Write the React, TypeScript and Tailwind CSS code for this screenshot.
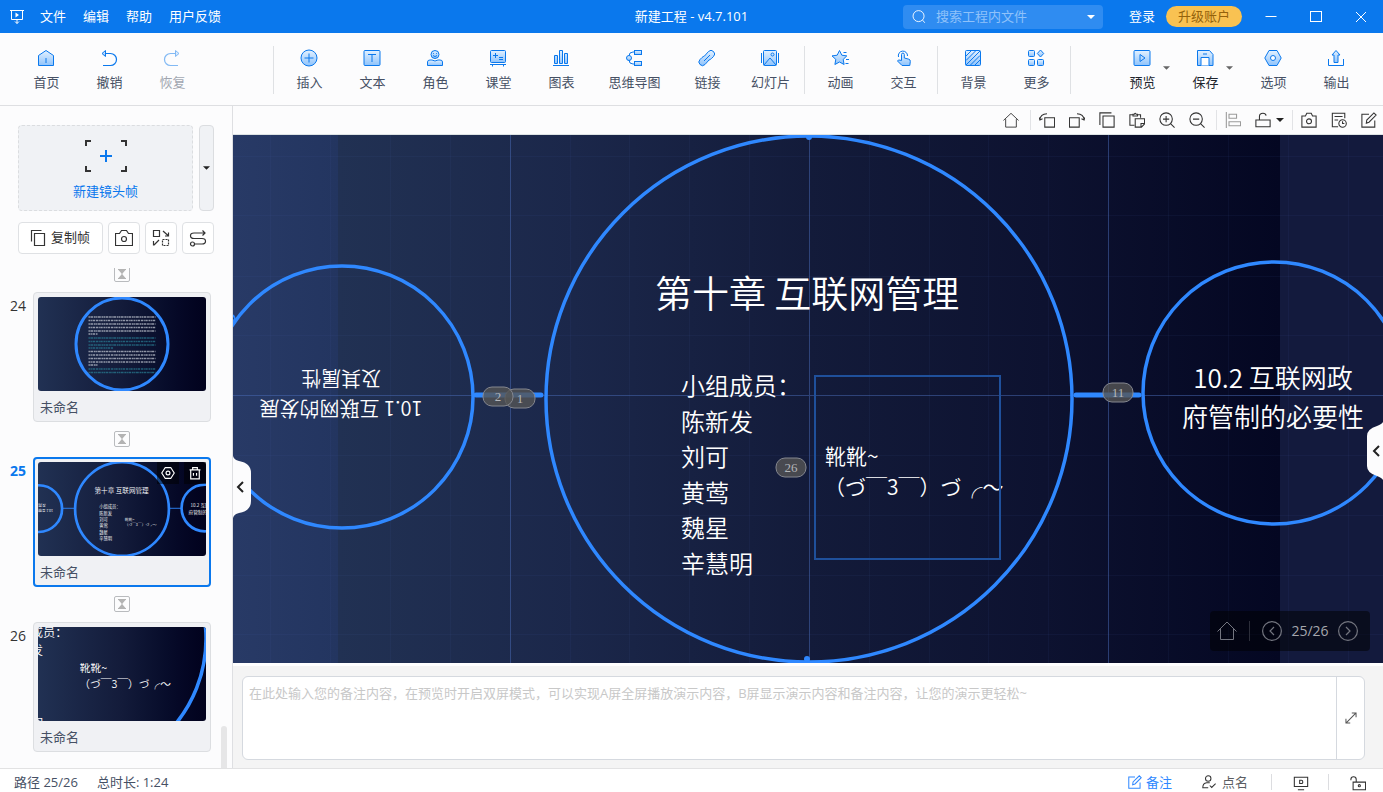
import type { ReactNode } from "react";

/* ---------- icons ---------- */

const Glyph = ({
  children,
  size = 18,
  className = "",
}: {
  children: ReactNode;
  size?: number;
  className?: string;
}) => (
  <svg
    width={size}
    height={size}
    viewBox="0 0 18 18"
    fill="none"
    stroke="currentColor"
    strokeWidth="1"
    className={className}
    aria-hidden="true"
  >
    {children}
  </svg>
);

const Caret = ({ className = "" }: { className?: string }) => (
  <svg width="8" height="4" viewBox="0 0 8 4" className={className} aria-hidden="true">
    <path d="M0 0h8L4 4z" fill="currentColor" />
  </svg>
);

const F = "url(#tool-fill)";

const icons: Record<string, ReactNode> = {
  首页: (
    <>
      <path d="M1.5 6.5 9 1.5l7.5 5v10h-15z" fill={F} />
      <path d="M9 9v5" />
    </>
  ),
  撤销: (
    <>
      <path d="M6 4.5h4.5a6 6 0 0 1 0 12H3" strokeWidth="1.2" />
      <path d="M5.5 1.5 2 4.5l3.5 3z" fill={F} />
    </>
  ),
  恢复: (
    <>
      <path d="M12 4.5H7.5a6 6 0 0 0 0 12H15" strokeWidth="1.2" />
      <path d="M12.5 1.5 16 4.5l-3.5 3z" fill={F} />
    </>
  ),
  插入: (
    <>
      <circle cx="9" cy="9" r="8" fill={F} />
      <path d="M9 4.5v9M4.5 9h9" />
    </>
  ),
  文本: (
    <>
      <rect x="1" y="1.5" width="16" height="15" rx="1" fill={F} />
      <path d="M5 5.5h8M9 5.5v7.5" />
    </>
  ),
  角色: (
    <>
      <circle cx="9" cy="5.5" r="4" fill={F} />
      <path d="M7 6.5q2 2.2 4 0M7.5 4.2v.8M10.5 4.2v.8" />
      <path d="M1.5 16.5v-3.5q0-2 2.5-2h2q3 2 6 0h2q2.5 0 2.5 2v3.5z" fill={F} />
    </>
  ),
  课堂: (
    <>
      <rect x="1.5" y="1.5" width="15" height="12" rx="1" fill={F} />
      <path d="M4 6.5h5M6.5 4v5M10 8.5h4M10 10.5h4M1 15.5h16M3.5 15.5v2M14.5 15.5v2" />
    </>
  ),
  图表: (
    <>
      <path d="M2.5 6.5h3v8h-3zM7.5 1.5h3v13h-3zM12.5 4.5h3v10h-3z" fill={F} />
      <path d="M1 16.5h16" />
    </>
  ),
  思维导图: (
    <>
      <path d="M9 3H8Q4 3 4 7v4q0 4 4 4h1" />
      <circle cx="4" cy="9" r="2.5" fill={F} />
      <rect x="9.5" y="1.5" width="7" height="4" fill={F} />
      <rect x="9.5" y="12.5" width="7" height="4" fill={F} />
    </>
  ),
  链接: (
    <>
      <path d="M10.5 2.5a3.5 3.5 0 0 1 5 5l-2 2q-1 1-2.5 1.5l-4 4.5a3.4 3.4 0 0 1-5-5l2-2q1-1 2.5-1.5z" fill={F} />
      <path d="m6 12 6-6" />
    </>
  ),
  幻灯片: (
    <>
      <rect x="2.5" y="1.5" width="13" height="15" rx="1" fill={F} />
      <path d="M.5 4v10M17.5 4v10M3 16l6-7 6 7" />
      <circle cx="11.5" cy="5.5" r="1.5" />
    </>
  ),
  动画: (
    <>
      <path d="m8.5 1.5 2.3 4.7 5 .7-3.6 3.5.9 5.1-4.6-2.5-4.6 2.5.9-5.1L1 6.9l5.2-.7z" fill={F} />
      <path d="M12.5 3.5h3M15 10.5h3M14.5 14.5h3" />
    </>
  ),
  交互: (
    <>
      <path d="M4.5 8a4.6 4.6 0 1 1 9-1" />
      <path d="M7.5 11.5V5.5a1.4 1.4 0 0 1 2.8 0V9l4.5 1.2q1.7.5 1.5 2.3l-.5 4H8L3.5 12q.8-1.7 2.5-.8z" fill={F} />
    </>
  ),
  背景: (
    <>
      <rect x="1.5" y="1.5" width="15" height="15" rx="1" fill={F} />
      <path d="M2 7 7 2M2 11.5 11.5 2M2 16 16 2M6.5 16 16 6.5M11 16l5-5" />
    </>
  ),
  更多: (
    <>
      <rect x="1.5" y="1.5" width="6" height="6" rx="1" fill={F} />
      <path d="m13.5 1 3.2 3.5-3.2 3.5-3.2-3.5z" fill={F} />
      <rect x="1.5" y="10.5" width="6" height="6" rx="1" fill={F} />
      <rect x="10.5" y="10.5" width="6" height="6" rx="1" fill={F} />
    </>
  ),
  预览: (
    <>
      <rect x="1" y="1.5" width="16" height="15" rx="1" fill={F} />
      <path d="M7 5.5v7l5-3.5z" />
    </>
  ),
  保存: (
    <>
      <path d="M1.5 1.5h12l3.5 4v11H1.5z" fill={F} />
      <path d="M5 16.5v-8h8v8" fill="#fff" />
      <path d="M7 5h4" />
    </>
  ),
  选项: (
    <>
      <path d="M5 1.5h8L17.2 9 13 16.5H5L.8 9z" fill={F} />
      <circle cx="9" cy="9" r="2.5" fill="#fff" />
    </>
  ),
  输出: (
    <>
      <path d="M9 1.5 13 6h-2v7.5H7V6H5z" fill={F} />
      <path d="M1.5 10v6.5h15V10" />
    </>
  ),
};

/* ---------- title bar ---------- */

const TitleBar = () => (
  <header className="grid h-[33px] shrink-0 grid-cols-[1fr_auto_1fr] items-center bg-[#0a78ed] text-white">
    <nav className="flex items-center gap-[17px] pl-2">
      <Glyph className="-mr-[3px]">
        <path d="M2 2.5h14M3.5 2.5v9h11v-9M9 11.5v4M7 13.5l2 2 2-2" />
        <path d="M7.5 4.5v5L11 7z" fill="currentColor" stroke="none" />
      </Glyph>
      {["文件", "编辑", "帮助", "用户反馈"].map((m) => (
        <button key={m}>{m}</button>
      ))}
    </nav>
    <h1>新建工程 - v4.7.101</h1>
    <div className="flex items-center justify-end">
      <div className="flex h-6 w-[200px] items-center rounded-sm bg-[#2f8cf1] px-2">
        <Glyph size={16}>
          <circle cx="8.5" cy="8" r="6.2" />
          <path d="m13 12.5 2.5 3" />
        </Glyph>
        <input
          aria-label="搜索工程内文件"
          placeholder="搜索工程内文件"
          className="ml-[9px] min-w-0 flex-1 bg-transparent outline-none placeholder:text-[#8fc2fa]"
        />
        <button aria-label="搜索选项">
          <Caret />
        </button>
      </div>
      <button className="ml-[26px]">登录</button>
      <button className="mr-[6px] ml-[11px] h-[21px] w-[76px] rounded-full bg-[#f9c252] text-[#94620c]">升级账户</button>
      <button aria-label="最小化" className="flex w-[45px] justify-center">
        <Glyph><path d="M3.5 8.5h11" /></Glyph>
      </button>
      <button aria-label="最大化" className="flex w-[45px] justify-center">
        <Glyph><rect x="3.5" y="3.5" width="11" height="10" /></Glyph>
      </button>
      <button aria-label="关闭" className="flex w-[45px] justify-center">
        <Glyph><path d="m4 4 10 10M14 4 4 14" /></Glyph>
      </button>
    </div>
  </header>
);

/* ---------- main toolbar ---------- */

const Tool = ({ name, wide, menu, disabled }: { name: string; wide?: boolean; menu?: boolean; disabled?: boolean }) => (
  <div className={`relative flex shrink-0 justify-center ${wide ? "w-[83px]" : "w-[63px]"}`}>
    <button
      disabled={disabled}
      className={`flex flex-col items-center gap-[5px] ${menu ? "text-[#20242c]" : "text-[#465064]"} ${disabled ? "opacity-50" : ""}`}
    >
      <Glyph className="text-[#0a78ed]">{icons[name]}</Glyph>
      <span className="leading-5">{name}</span>
    </button>
    {menu && (
      <button aria-label={`${name}选项`} className="absolute top-[17px] right-1 text-[#666]">
        <Caret className="w-[7px]" />
      </button>
    )}
  </div>
);

const Divider = () => <span className="mr-1 ml-0.5 h-12 w-px bg-[#dfe1e4]" />;

const Toolbar = () => (
  <div className="flex h-[73px] shrink-0 items-center border-b border-[#dedfe2] bg-[#fcfcfd] px-[15px] pt-0.5">
    <svg width="0" height="0" className="absolute" aria-hidden="true">
      <linearGradient id="tool-fill" x1="0" y1="0" x2="0" y2="1">
        <stop offset="0" stopColor="#e3f1ff" />
        <stop offset="1" stopColor="#8fc3fb" />
      </linearGradient>
    </svg>
    <Tool name="首页" />
    <Tool name="撤销" />
    <Tool name="恢复" disabled />
    <div className="ml-[67px] flex items-center">
      <Divider />
      <Tool name="插入" />
      <Tool name="文本" />
      <Tool name="角色" />
      <Tool name="课堂" />
      <Tool name="图表" />
      <Tool name="思维导图" wide />
      <Tool name="链接" />
      <Tool name="幻灯片" />
      <Divider />
      <Tool name="动画" />
      <Tool name="交互" />
      <Divider />
      <Tool name="背景" />
      <Tool name="更多" />
      <Divider />
    </div>
    <div className="ml-auto flex">
      <Tool name="预览" menu />
      <Tool name="保存" menu />
      <span className="w-[5px]" />
      <Tool name="选项" />
      <Tool name="输出" />
    </div>
  </div>
);

/* ---------- slide drawing, shared by the canvas and the thumbnails ---------- */

const members = [
  { y: 260, name: "小组成员：" },
  { y: 296, name: "陈新发" },
  { y: 331, name: "刘可" },
  { y: 367, name: "黄莺" },
  { y: 402, name: "魏星" },
  { y: 438, name: "辛慧明" },
];

// closeUp leaves out whatever lies outside the zoomed-in frame
const SlideArt = ({ stroke, link, closeUp }: { stroke: number; link: number; closeUp?: boolean }) => (
  <>
    <g fill="none" stroke="#2f88ff" strokeWidth={stroke}>
      <circle cx="109" cy="262" r="131" />
      <circle cx="576" cy="264" r="263" />
      <circle cx="1041" cy="258" r="131" />
    </g>
    <g stroke="#2f88ff" strokeWidth={link} strokeLinecap="round">
      <path d="M243 260h65M843 260h63" />
    </g>
    <g fill="#fff" className="font-['Noto_Sans_CJK_SC',sans-serif] font-[350]">
      <g fontSize="24">
        {members
          .filter((m) => !closeUp || m.name.length > 2)
          .map((m) => (
            <text key={m.name} x="448" y={m.y}>{m.name}</text>
          ))}
      </g>
      <g fontSize="21">
        <text x="592" y="329">靴靴~</text>
        <text x="591" y="360">（づ￣3￣）づ╭～</text>
      </g>
      {!closeUp && (
        <>
          <text x="422" y="173" fontSize="37">第十章 互联网管理</text>
          <g fontSize="26" textAnchor="middle">
            <text x="1040" y="253">10.2 互联网政</text>
            <text x="1040" y="292">府管制的必要性</text>
          </g>
          <g fontSize="20" textAnchor="middle" transform="rotate(180 108 250)">
            <text x="108" y="234">10.1 互联网的发展</text>
            <text x="108" y="264">及其属性</text>
          </g>
        </>
      )}
    </g>
  </>
);

const badges = [
  { x: 287, y: 264, label: "1" },
  { x: 265, y: 262, label: "2" },
  { x: 885, y: 258, label: "11" },
  { x: 558, y: 333, label: "26" },
];

const columns = [37, 97, 157, 217, 337, 396, 456, 516, 636, 696, 755, 815, 935, 995, 1055, 1115];
const rows = [21, 80, 141, 200, 320, 380, 440, 499];

const Canvas = () => (
  <div className="relative min-h-0 flex-1 overflow-hidden bg-[#0f1737]">
    <svg
      viewBox="0 0 1150 528"
      preserveAspectRatio="xMidYMid slice"
      className="h-full w-full"
      role="img"
      aria-label="第十章 互联网管理"
    >
      <defs>
        <linearGradient id="slide-bg">
          <stop offset="0" stopColor="#213153" />
          <stop offset="0.25" stopColor="#1b274a" />
          <stop offset="0.5" stopColor="#131b3a" />
          <stop offset="0.75" stopColor="#0d1230" />
          <stop offset="1" stopColor="#040722" />
        </linearGradient>
        <linearGradient id="band-left">
          <stop offset="0" stopColor="#283a66" />
          <stop offset="1" stopColor="#233560" />
        </linearGradient>
      </defs>
      <rect x="105" width="942" height="528" fill="url(#slide-bg)" />
      <rect width="105" height="528" fill="url(#band-left)" />
      <rect x="1047" width="103" height="528" fill="#131a3d" />
      <g stroke="#4a6cb0" strokeOpacity="0.08" shapeRendering="crispEdges">
        {columns.map((x) => (
          <path key={x} d={`M${x} 0v528`} />
        ))}
        {rows.map((y) => (
          <path key={y} d={`M0 ${y}h1150`} />
        ))}
      </g>
      <path
        d="M277 0v528M576 0v528M875 0v528M0 260h1150"
        stroke="#4a6cb8"
        strokeOpacity="0.5"
        shapeRendering="crispEdges"
      />
      <SlideArt stroke={3.5} link={5} />
      <path d="M0 180q3 4 0 6" stroke="#2f88ff" strokeWidth="2" />
      <circle cx="576" cy="2" r="3" fill="#2f88ff" />
      <circle cx="574" cy="524" r="3" fill="#2f88ff" />
      <rect x="582" y="241" width="185" height="183" fill="none" stroke="#1f509b" strokeWidth="2" />
      {badges.map((b) => (
        <g key={b.label}>
          <rect
            x={b.x - 15}
            y={b.y - 10}
            width="30"
            height="19"
            rx="9"
            fill="#555"
            fillOpacity="0.8"
            stroke="#85878f"
          />
          <text
            x={b.x}
            y={b.y + 4}
            fontSize="13"
            textAnchor="middle"
            fill="#b4b6ba"
            className="font-['Liberation_Serif',serif]"
          >
            {b.label}
          </text>
        </g>
      ))}
    </svg>

    <button aria-label="收起左侧面板" className="absolute top-[321px] left-0 h-[62px] w-[18px]">
      <svg width="18" height="62" viewBox="0 0 18 62" aria-hidden="true">
        <path d="M0 0q1 4 6 5 12 2 12 12v28q0 10-12 12-5 1-6 5z" fill="#fcfcfd" />
        <path d="m10 26-5 5 5 5" fill="none" stroke="#222" strokeWidth="2" />
      </svg>
    </button>
    <button aria-label="展开右侧面板" className="absolute top-[287px] right-0 h-[58px] w-4">
      <svg width="16" height="58" viewBox="0 0 16 58" aria-hidden="true">
        <path d="M16 0v58q-1-2-6-4Q0 51 0 44V14Q0 7 10 4q5-2 6-4z" fill="#fcfcfd" />
        <path d="m12 24-5 5 5 5" fill="none" stroke="#222" strokeWidth="2" />
      </svg>
    </button>

    <div className="absolute right-[13px] bottom-3 flex h-10 w-40 items-center rounded bg-black/50 pl-[7px] text-[#73757f]">
      <button aria-label="回到首页">
        <svg width="20" height="20" viewBox="0 0 20 20" fill="none" stroke="currentColor" aria-hidden="true">
          <path d="M.5 10.5 10 1l9.5 9.5M3.5 8v10.5h13V8" />
        </svg>
      </button>
      <span className="mx-3 h-5 w-px bg-[#2c2e3a]" />
      <button aria-label="上一帧">
        <svg width="20" height="20" viewBox="0 0 20 20" fill="none" stroke="currentColor" strokeWidth="1.2" aria-hidden="true">
          <circle cx="10" cy="10" r="9.4" />
          <path d="m12 6-4 4 4 4" />
        </svg>
      </button>
      <span className="flex-1 text-center text-sm text-[#a5a7ad]">25/26</span>
      <button aria-label="下一帧" className="mr-3">
        <svg width="20" height="20" viewBox="0 0 20 20" fill="none" stroke="currentColor" strokeWidth="1.2" aria-hidden="true">
          <circle cx="10" cy="10" r="9.4" />
          <path d="m8 6 4 4-4 4" />
        </svg>
      </button>
    </div>
  </div>
);

/* ---------- sidebar ---------- */

const Hourglass = () => (
  <li className="flex w-[244px] justify-center pb-px">
    <button
      aria-label="停留时间"
      className="flex size-4 items-center justify-center rounded-xs border border-[#b9bbbe] text-[#b3b3b3]"
    >
      <svg width="8" height="10" viewBox="0 0 8 10" fill="currentColor" aria-hidden="true">
        <path d="M0 0h8v1H7.5L4.5 4.5v1L7.5 9H8v1H0V9h.5l3-3.5v-1L.5 1H0z" />
      </svg>
    </button>
  </li>
);

// paragraphs on slide 24 are far too small to read, so they are drawn as dashes
const TextPreview = () => (
  <g strokeWidth="1.5" opacity="0.7">
    {[20, 23.5, 27, 30.5, 34, 37, 41, 44.5, 48, 51, 54.5, 58, 61.5, 65, 68, 72, 75.5].map((y, i) => (
      <path
        key={y}
        d={i === 5 || i === 14 ? `M50.5 ${y}h9` : i === 9 ? `M50.5 ${y}h25` : `M50.5 ${y}h67`}
        stroke={(i >= 6 && i <= 9) || i >= 15 ? "#2a7f95" : "#c9ced8"}
        strokeDasharray={i % 2 ? "2 .6 1.2 .5 2.4 .8" : "1.4 .5 2.8 .7 1.8 .4"}
      />
    ))}
  </g>
);

const thumbBg = "block h-[94px] w-full rounded-[3px] bg-linear-to-r from-[#213153] via-[#131b3a] to-[#02021d]";

const Frame = ({ no, active, children }: { no: number; active?: boolean; children: ReactNode }) => (
  <li className="flex">
    <span
      className={`w-[33px] pr-[7px] pt-1 text-right text-sm ${active ? "font-bold text-[#0a78ed]" : "text-[#333]"}`}
    >
      {no}
    </span>
    <div
      className={`relative h-[130px] w-[178px] rounded bg-[#f0f1f4] ${
        active ? "border-2 border-[#0a78ed] p-[3px]" : "border border-[#dcdee1] p-1"
      }`}
    >
      {children}
      {active && (
        <div className="absolute top-[3px] right-[3px] flex gap-[5px] text-white">
          <button aria-label="帧设置" className="flex size-[22px] items-center justify-center bg-black/50">
            <Glyph size={14}>
              <path d="M5.5 2h7L17 9l-4.5 7h-7L1 9z" strokeWidth="1.5" />
              <circle cx="9" cy="9" r="2.5" strokeWidth="1.5" />
            </Glyph>
          </button>
          <button aria-label="删除帧" className="flex size-[22px] items-center justify-center bg-black/50">
            <Glyph size={14}>
              <path d="M2 5h14M6 5V2h6v3M3.5 5v11.5h11V5M7 9v3.5M11 9v3.5" strokeWidth="1.5" />
            </Glyph>
          </button>
        </div>
      )}
      <p className="mt-1.5 pl-0.5 leading-5 text-[#465064]">未命名</p>
    </div>
  </li>
);

const sideButton = "flex h-8 items-center justify-center rounded border border-[#dfe1e4] bg-white text-[#333]";

const Sidebar = () => (
  <aside className="relative flex w-[233px] shrink-0 flex-col border-r border-[#dedfe2] bg-[#fcfcfd]">
    <div className="flex gap-1.5 pt-[19px] pl-[18px]">
      <button className="flex h-[86px] w-[175px] flex-col items-center rounded-sm border border-dashed border-[#dbdde0] bg-[#f0f2f5] pt-[14px] text-[#0a78ed]">
        <svg width="42" height="32" viewBox="0 0 42 32" fill="none" aria-hidden="true">
          <path d="M1 6V1h5M36 1h5v5M41 26v5h-5M6 31H1v-5" stroke="#333" strokeWidth="2" />
          <path d="M21 10v12M15 16h12" stroke="#0a78ed" strokeWidth="2" />
        </svg>
        <span className="mt-[9px] leading-5">新建镜头帧</span>
      </button>
      <button aria-label="更多镜头帧" className="flex h-[86px] w-[15px] items-center justify-center rounded border border-[#dbdde0] bg-[#f0f2f5] text-[#222]">
        <Caret className="w-[7px]" />
      </button>
    </div>
    <div className="mt-[11px] flex gap-[5px] pl-[18px]">
      <button className={`${sideButton} w-[85px] gap-1 pr-0.5`}>
        <Glyph>
          <path d="M2.5 12.5v-11h10M5.5 4.5h10v12h-10z" strokeWidth="1.2" />
        </Glyph>
        复制帧
      </button>
      <button aria-label="截图" className={`${sideButton} w-8`}>
        <Glyph>
          <path d="M.5 4.5h4l2-3h5l2 3h4v12H.5z" strokeWidth="1.2" />
          <circle cx="9" cy="10" r="2.5" strokeWidth="1.2" />
        </Glyph>
      </button>
      <button aria-label="替换帧" className={`${sideButton} w-8`}>
        <Glyph>
          <path d="M1.5 1.5h6v6h-6zM11 2l5 4.5M16.5 3.5V7H13M2 16l5-5M1.5 12v4.5" strokeWidth="1.2" />
          <path d="M10.5 10.5h6v6h-6z" strokeDasharray="2 1" strokeWidth="1.2" />
        </Glyph>
      </button>
      <button aria-label="路径" className={`${sideButton} w-8`}>
        <Glyph>
          <path d="M16 4H5q-3.5 0-3.5 2.7T5 9.5h8q3.5 0 3.5 2.7T13 15H5.5M13.5 1.5 16 4l-2.5 2.5" strokeWidth="1.2" />
          <circle cx="3.5" cy="15" r="2" strokeWidth="1.2" />
        </Glyph>
      </button>
    </div>
    <div className="mt-[14px] min-h-0 flex-1 overflow-hidden">
      <ul className="-mt-0.5 flex flex-col gap-[9px]">
        <Hourglass />
        <Frame no={24}>
          <svg viewBox="0 0 168 94" className={thumbBg} role="img" aria-label="第24帧">
            <circle cx="84" cy="47" r="46" fill="none" stroke="#2f88ff" strokeWidth="3" />
            <TextPreview />
          </svg>
        </Frame>
        <Hourglass />
        <Frame no={25} active>
          <svg viewBox="105 0 942 528" preserveAspectRatio="xMidYMid slice" className={thumbBg} role="img" aria-label="第25帧">
            <SlideArt stroke={15} link={5} />
          </svg>
        </Frame>
        <Hourglass />
        <Frame no={26}>
          <svg viewBox="510 241 329 184" preserveAspectRatio="xMidYMid slice" className={thumbBg} role="img" aria-label="第26帧">
            <SlideArt stroke={7} link={5} closeUp />
          </svg>
        </Frame>
      </ul>
    </div>
    <span className="absolute right-[5px] bottom-0 h-[42px] w-[6px] rounded-t-full bg-[#e6e6e7]" />
  </aside>
);

/* ---------- view bar over the canvas ---------- */

const ViewButton = ({ label, faded, children }: { label: string; faded?: boolean; children: ReactNode }) => (
  <button aria-label={label} className={`flex w-7 justify-center ${faded ? "text-[#9a9a9a]" : "text-[#333]"}`}>
    <Glyph size={16}>{children}</Glyph>
  </button>
);

const ViewDivider = ({ className }: { className: string }) => <span className={`h-5 w-px bg-[#e2e3e6] ${className}`} />;

const ViewBar = () => (
  <div className="flex h-[29px] shrink-0 items-center justify-end gap-0.5 border-b border-[#dde3e4] bg-[#fcfcfd]">
    <ViewButton label="主页">
      <path d="M.5 9.5 9 1.5l8.5 8M3 8v9h12V8" />
    </ViewButton>
    <ViewDivider className="ml-[3px]" />
    <ViewButton label="向左旋转">
      <path d="M6.5 6.5h11v10.5h-11zM1 8.5Q1.5 2.5 9 2M.2 6 1 9l3-1.5" strokeWidth="1.2" />
    </ViewButton>
    <ViewButton label="向右旋转">
      <path d="M.5 6.5h11v10.5h-11zM17 8.5Q16.5 2.5 9 2M17.8 6 17 9l-3-1.5" strokeWidth="1.2" />
    </ViewButton>
    <ViewButton label="复制">
      <path d="M1 14.5V1h13M4.5 4.5h12.5v12.5H4.5z" strokeWidth="1.2" />
    </ViewButton>
    <ViewButton label="粘贴">
      <path d="M6 15H1V3h3.5M9.5 3H13v3.5M4.5 4.5v-2h1.5q1-2 2 0h1.5v2zM7 7.5h10.5v6L14 17H7zM17 13h-3.5v3.5" strokeWidth="1.2" />
    </ViewButton>
    <ViewButton label="放大">
      <circle cx="8" cy="8" r="7" strokeWidth="1.2" />
      <path d="m13 13 4.5 4.5M4.5 8h7M8 4.5v7" strokeWidth="1.2" />
    </ViewButton>
    <ViewButton label="缩小">
      <circle cx="8" cy="8" r="7" strokeWidth="1.2" />
      <path d="m13 13 4.5 4.5M4.5 8h7" strokeWidth="1.2" />
    </ViewButton>
    <ViewDivider className="ml-[3px]" />
    <ViewButton label="对齐" faded>
      <path d="M1.5 0v18M4.5 2.5H13v4.5H4.5zM4.5 11h13v4.5h-13z" strokeWidth="1.2" />
    </ViewButton>
    <ViewButton label="锁定">
      <path d="M1 9h16v7.5H1zM5 9V5q0-3.5 4-3.5 3 0 3.5 2.5" strokeWidth="1.2" />
    </ViewButton>
    <button aria-label="锁定选项" className="-ml-[3px] text-[#222]">
      <Caret />
    </button>
    <ViewDivider className="ml-[6px]" />
    <ViewButton label="截图">
      <path d="M1 4.5h4l1.5-3h5l1.5 3h4V17H1z" strokeWidth="1.2" />
      <circle cx="9" cy="10.5" r="2.8" strokeWidth="1.2" />
    </ViewButton>
    <ViewButton label="时间轴">
      <path d="M8 16.5H1.5v-15h14V7M4 5h9M4 9h4" strokeWidth="1.2" />
      <circle cx="13" cy="13" r="4.2" strokeWidth="1.2" />
      <path d="M13 10.5V13h2" strokeWidth="1.2" />
    </ViewButton>
    <ViewButton label="编辑">
      <path d="M9 2.5H1V17h14.5V9.5M6 12.5l.5-3.5 8-8 2.5 2.5-8 8z" strokeWidth="1.2" />
    </ViewButton>
  </div>
);

/* ---------- notes and status bar ---------- */

const Notes = () => (
  <section className="h-[105px] shrink-0 border-t-[3px] border-white bg-[#f4f4f4] pt-2.5 pr-[18px] pb-2 pl-[9px]">
    <div className="flex h-full overflow-hidden rounded-md border border-[#d5d9df] bg-white">
      <textarea
        aria-label="备注"
        placeholder="在此处输入您的备注内容，在预览时开启双屏模式，可以实现A屏全屏播放演示内容，B屏显示演示内容和备注内容，让您的演示更轻松~"
        className="flex-1 resize-none px-1.5 py-1.5 leading-5 outline-none placeholder:text-[#c8c8c8]"
      />
      <button aria-label="展开备注" className="flex w-7 items-center justify-center border-l border-[#d5d9df] text-[#555]">
        <Glyph size={14}>
          <path d="M2.5 15.5l13-13M10 2.5h5.5V8M8 15.5H2.5V10" strokeWidth="1.3" />
        </Glyph>
      </button>
    </div>
  </section>
);

const StatusBar = () => (
  <footer className="flex h-6 shrink-0 items-start border-t border-[#e2e2e3] bg-white pt-[3px] pr-[17px] pl-[14px] leading-5 text-[#465064]">
    <span>路径 25/26</span>
    <span className="ml-[19px]">总时长: 1:24</span>
    <button className="ml-auto flex items-center gap-1 text-[#2f88ff]">
      <Glyph size={14}>
        <path d="M9 2.5H1V17h14.5V9.5M6 12.5l.5-3.5 8-8 2.5 2.5-8 8z" strokeWidth="1.3" />
      </Glyph>
      备注
    </button>
    <button className="ml-[30px] flex items-center gap-1.5 text-[#5c5e63]">
      <Glyph size={14} className="text-[#333]">
        <circle cx="8" cy="4.5" r="3.5" strokeWidth="1.3" />
        <path d="M8 16.5H1q0-6 5-6.5h4M10 13.5l2.5 2.5 5-5" strokeWidth="1.3" />
      </Glyph>
      点名
    </button>
    <span className="mt-0.5 ml-[23px] h-4 w-px bg-[#dcdde0]" />
    <button aria-label="放映" className="mt-[3px] ml-[21px] text-[#333]">
      <Glyph size={16}>
        <path d="M1.5 2.5h15v10.5h-15zM5.5 16.5h7" strokeWidth="1.2" />
        <path d="M7.5 6h2q1.5 0 1.5 1.8t-1.5 1.7h-2z" strokeWidth="1.2" />
      </Glyph>
    </button>
    <span className="mt-0.5 ml-[19px] h-4 w-px bg-[#dcdde0]" />
    <button aria-label="锁定" className="mt-[3px] ml-[21px] text-[#333]">
      <Glyph size={16}>
        <path d="M3.5 8h14v8.5h-14zM1 6V5q0-3 3-3t3 3v3" strokeWidth="1.2" />
        <circle cx="10.5" cy="12" r="1.2" strokeWidth="1.2" />
      </Glyph>
    </button>
  </footer>
);

export default function App() {
  return (
    <div className="flex h-screen flex-col overflow-hidden bg-white font-['Open_Sans','Noto_Sans_CJK_SC',sans-serif] text-[13px]">
      <TitleBar />
      <Toolbar />
      <main className="flex min-h-0 flex-1">
        <Sidebar />
        <div className="flex min-w-0 flex-1 flex-col">
          <ViewBar />
          <Canvas />
          <Notes />
        </div>
      </main>
      <StatusBar />
    </div>
  );
}
